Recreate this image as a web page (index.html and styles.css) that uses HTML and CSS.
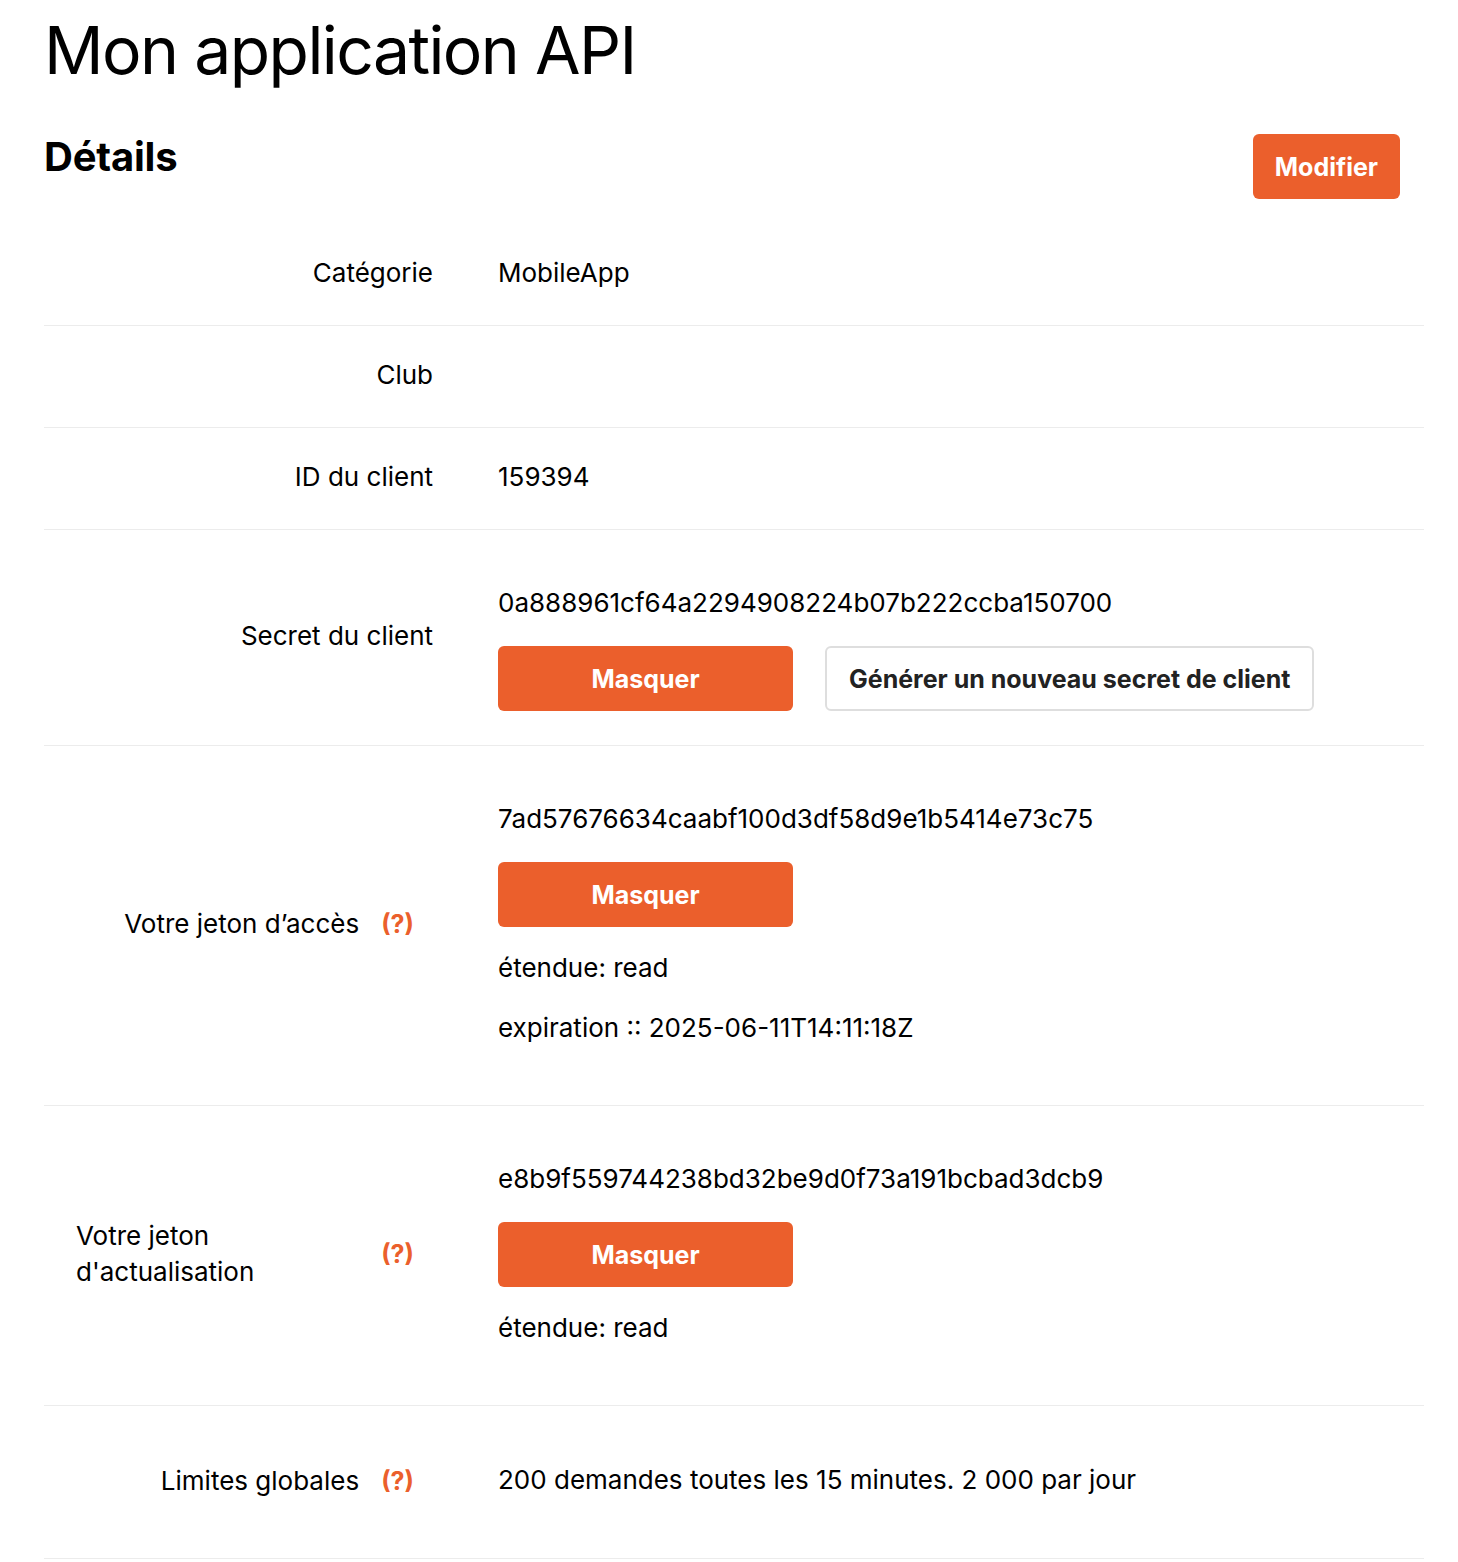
FILE: index.html
```html
<!DOCTYPE html>
<html lang="fr">
<head>
<meta charset="utf-8">
<title>Mon application API</title>
<link rel="stylesheet" href="styles.css">
</head>
<body>
<main class="page">
  <h1 class="title">Mon application API</h1>
  <div class="section-head">
    <h2 class="section-title">Détails</h2>
    <button class="btn btn-primary btn-edit" type="button">Modifier</button>
  </div>
  <div class="details">
    <div class="row">
      <div class="label"><span class="label-text">Catégorie</span></div>
      <div class="value">MobileApp</div>
    </div>
    <div class="row">
      <div class="label"><span class="label-text">Club</span></div>
      <div class="value"></div>
    </div>
    <div class="row">
      <div class="label"><span class="label-text">ID du client</span></div>
      <div class="value">159394</div>
    </div>
    <div class="row row-secret">
      <div class="label"><span class="label-text">Secret du client</span></div>
      <div class="value">
        <p class="token">0a888961cf64a2294908224b07b222ccba150700</p>
        <div class="actions">
          <button class="btn btn-primary btn-wide" type="button">Masquer</button>
          <button class="btn btn-secondary" type="button">Générer un nouveau secret de client</button>
        </div>
      </div>
    </div>
    <div class="row">
      <div class="label"><span class="label-text">Votre jeton d’accès</span><span class="help">(?)</span></div>
      <div class="value">
        <p class="token">7ad57676634caabf100d3df58d9e1b5414e73c75</p>
        <div class="actions">
          <button class="btn btn-primary btn-wide" type="button">Masquer</button>
        </div>
        <p class="meta">étendue: read</p>
        <p class="meta meta-last">expiration :: 2025-06-11T14:11:18Z</p>
      </div>
    </div>
    <div class="row">
      <div class="label"><span class="label-text">Votre jeton d'actualisation</span><span class="help">(?)</span></div>
      <div class="value">
        <p class="token">e8b9f559744238bd32be9d0f73a191bcbad3dcb9</p>
        <div class="actions">
          <button class="btn btn-primary btn-wide" type="button">Masquer</button>
        </div>
        <p class="meta meta-last">étendue: read</p>
      </div>
    </div>
    <div class="row">
      <div class="label"><span class="label-text">Limites globales</span><span class="help">(?)</span></div>
      <div class="value">
        <p class="limits">200 demandes toutes les 15 minutes. 2 000 par jour</p>
      </div>
    </div>
  </div>
</main>
</body>
</html>
```

FILE: styles.css
```css
html, body {
  margin: 0;
  padding: 0;
  background: #ffffff;
}

body {
  font-family: Inter, "Noto Sans", "Liberation Sans", sans-serif;
  color: #111111;
  font-size: 26px;
  line-height: 36px;
}

.page {
  padding: 10px 34px 0 44px;
}

.title {
  margin: 0;
  font-size: 66px;
  line-height: 80px;
  font-weight: 400;
  letter-spacing: -1.6px;
  color: #000000;
}

.section-head {
  display: flex;
  justify-content: space-between;
  align-items: flex-start;
  margin-top: 44px;
  padding-right: 24px;
}

.section-title {
  margin: 0;
  font-size: 40px;
  line-height: 46px;
  font-weight: 700;
  letter-spacing: -0.2px;
  color: #000000;
}

.btn {
  height: 65px;
  border-radius: 6px;
  font-family: inherit;
  font-size: 25px;
  font-weight: 700;
  padding: 0 22px;
  cursor: pointer;
  box-sizing: border-box;
}

.btn-primary {
  background: #eb5f2c;
  color: #ffffff;
  border: none;
}

.btn-secondary {
  background: #ffffff;
  color: #222222;
  border: 2px solid #dedede;
}

.btn-wide {
  width: 295px;
}

.details {
  margin-top: 25px;
}

.row {
  display: grid;
  grid-template-columns: 389px 1fr;
  padding: 31px 0 34px;
  border-bottom: 1px solid #ececec;
}

.row-secret {
  padding-bottom: 34px;
}

.label {
  display: flex;
  justify-content: flex-end;
  align-items: center;
  align-self: center;
  padding-left: 32px;
  color: #000000;
}

.label-text {
  flex: 0 1 auto;
}

.help {
  flex: none;
  margin-left: 22px;
  margin-right: 19px;
  color: #eb5f2c;
  font-weight: 700;
  font-size: 25px;
}

.value {
  padding-left: 65px;
  min-height: 36px;
  color: #000000;
}

.token {
  margin: 24px 0 0;
}

.actions {
  display: flex;
  gap: 32px;
  margin-top: 25px;
}

.meta {
  margin: 23px 0 0;
}

.meta + .meta {
  margin-top: 24px;
}

.meta-last {
  margin-bottom: 25px;
}

.limits {
  margin: 25px 0 26px;
}
```
